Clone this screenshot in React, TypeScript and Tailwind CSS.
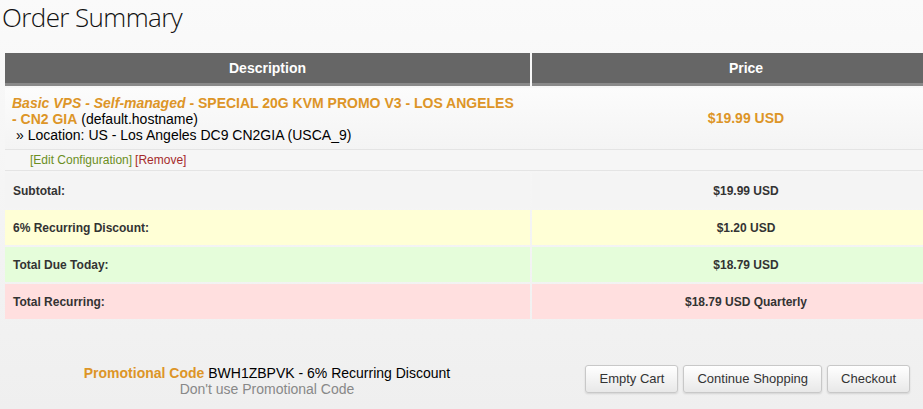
export default function App() {
  const totals = [
    { label: 'Subtotal:', value: '$19.99 USD', bg: 'bg-[#f4f4f4]' },
    { label: '6% Recurring Discount:', value: '$1.20 USD', bg: 'bg-[#ffffd6]' },
    { label: 'Total Due Today:', value: '$18.79 USD', bg: 'bg-[#e5fdda]' },
    { label: 'Total Recurring:', value: '$18.79 USD Quarterly', bg: 'bg-[#ffdfdf]' },
  ];

  return (
    <div className="w-[923px] h-[409px] overflow-hidden bg-gradient-to-b from-[#fafafa] to-[#efefef] font-['Liberation_Sans',Arial,sans-serif]">
      {/* Title */}
      <h1 className="pl-[2px] pt-[1px] h-[53px] text-[26px] leading-[32px] font-light text-[#111] font-['Open_Sans',sans-serif] tracking-[-0.6px]">
        Order Summary
      </h1>

      {/* Cart table */}
      <div className="ml-[5px] w-[955px]">
        <div className="flex gap-[2px] h-[33px]">
          <div className="w-[525px] bg-[#666] border-b-[3px] border-[#8a8a8a] flex items-center justify-center text-white font-bold text-[14px]">
            Description
          </div>
          <div className="flex-1 bg-[#666] border-b-[3px] border-[#8a8a8a] flex items-center justify-center text-white font-bold text-[14px]">
            Price
          </div>
        </div>

        <div className="mt-[2px] flex gap-[2px] h-[62px] bg-gradient-to-b from-[#fcfcfc] to-[#f4f4f4] border-b border-[#e4e4e4]">
          <div className="w-[525px] pl-[7px] pr-[8px] pt-[7px] text-[14px] leading-[16px] text-black">
            <span className="font-bold text-[#dd9527]">
              <i>Basic VPS - Self-managed</i> - SPECIAL 20G KVM PROMO V3 - LOS ANGELES - CN2 GIA
            </span>{' '}
            (default.hostname)
            <div className="pl-[4px]">» Location: US - Los Angeles DC9 CN2GIA (USCA_9)</div>
          </div>
          <div className="flex-1 flex items-center justify-center font-bold text-[14px] text-[#dd9527]">
            $19.99 USD
          </div>
        </div>

        <div className="h-[21px] flex items-center pl-[25px] text-[12px] bg-[#f6f6f6] border-b border-[#e4e4e4]">
          <span className="text-[#6b8e23]">[Edit Configuration]</span>
          <span className="ml-[3px] text-[#a52a2a]">[Remove]</span>
        </div>

        {totals.map((row, i) => (
          <div key={i} className="flex gap-[2px] mt-[2px] h-[35px] first:mt-0">
            <div className={`w-[525px] pl-[8px] flex items-center text-[12px] font-bold text-[#333] ${row.bg}`}>
              {row.label}
            </div>
            <div className={`flex-1 flex items-center justify-center text-[12px] font-bold text-[#333] ${row.bg}`}>
              {row.value}
            </div>
          </div>
        ))}
      </div>

      {/* Promo + actions */}
      <div className="flex mt-[44px]">
        <div className="w-[534px] text-center text-[14px] leading-[16px] pt-[2px]">
          <div>
            <span className="font-bold text-[#dd9527]">Promotional Code</span>{' '}
            <span className="text-black">BWH1ZBPVK - 6% Recurring Discount</span>
          </div>
          <div className="text-[#888]">Don't use Promotional Code</div>
        </div>
        <div className="flex-1 flex justify-end gap-[5px] pr-[13px] pt-[2px]">
          {['Empty Cart', 'Continue Shopping', 'Checkout'].map((label) => (
            <button
              key={label}
              className="h-[28px] px-[13px] rounded-[3px] border border-[#c8c8c8] bg-gradient-to-b from-white to-[#e8e8e8] shadow-[0_1px_2px_rgba(0,0,0,0.12)] text-[13px] text-[#333]"
            >
              {label}
            </button>
          ))}
        </div>
      </div>
    </div>
  );
}
